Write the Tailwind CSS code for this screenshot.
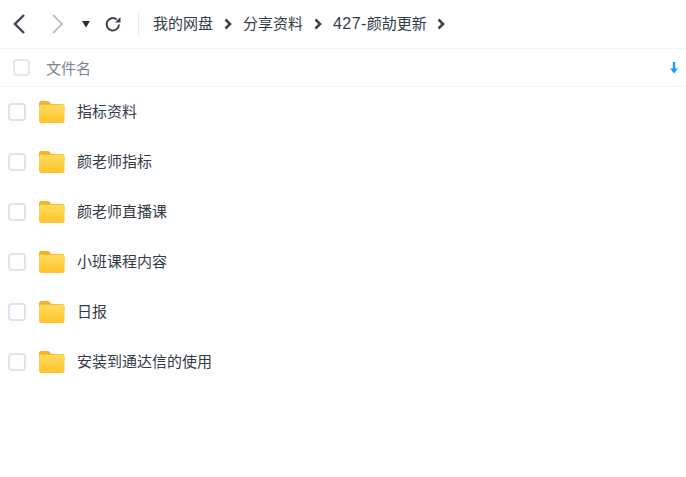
<!DOCTYPE html>
<html lang="zh">
<head>
<meta charset="utf-8">
<script src="https://cdn.jsdelivr.net/npm/@tailwindcss/browser@4"></script>
</head>
<body class="bg-white overflow-hidden font-['Liberation_Sans','Noto_Sans_CJK_SC',sans-serif]">
<svg class="absolute w-0 h-0"><defs><linearGradient id="f1" x1="0" y1="0" x2="0" y2="1"><stop offset="0" stop-color="#ffdc5e"/><stop offset="1" stop-color="#ffc32a"/></linearGradient></defs></svg>
<div class="w-[686px] h-[477px] flex flex-col">
  <div class="h-[49px] flex items-center border-b border-[#f1f2f4] text-[15px] text-[#333b47]">
    <svg class="ml-[12px] w-[14px] h-[22px]" viewBox="0 0 14 22" fill="none" stroke="#3d4450" stroke-width="2.4"><path d="M12 2 3 11l9 9"/></svg>
    <svg class="ml-[25px] w-[14px] h-[22px]" viewBox="0 0 14 22" fill="none" stroke="#c3c6cb" stroke-width="2.2"><path d="M2 2l9 9-9 9"/></svg>
    <svg class="ml-[16px] w-[10px] h-[8px]" viewBox="0 0 10 8" fill="#2a303a"><path d="M1 1h8L5 7.500z"/></svg>
    <svg class="ml-[13px] w-[18px] h-[18px]" viewBox="0 0 18 18" fill="none" stroke="#3d4450" stroke-width="2"><path d="M15 9.500A6.200 6.200 0 1 1 12.800 4.500"/><path d="M11 7.500h5.500V2z" fill="#3d4450" stroke="none"/></svg>
    <div class="ml-[16px] w-px h-[22px] bg-[#e8e9eb]"></div>
    <span class="ml-[14px]">我的网盘</span>
    <svg class="ml-[11px] w-[8px] h-[12px]" viewBox="0 0 8 12" fill="none" stroke="#3d4450" stroke-width="2.600"><path d="M1.500 1.500 6 6l-4.500 4.500"/></svg>
    <span class="ml-[11px]">分享资料</span>
    <svg class="ml-[11px] w-[8px] h-[12px]" viewBox="0 0 8 12" fill="none" stroke="#3d4450" stroke-width="2.600"><path d="M1.500 1.500 6 6l-4.500 4.500"/></svg>
    <span class="ml-[11px]"><span class="text-[16px] tracking-[0.4px]">427-</span>颜劼更新</span>
    <svg class="ml-[10px] w-[8px] h-[12px]" viewBox="0 0 8 12" fill="none" stroke="#3d4450" stroke-width="2.600"><path d="M1.500 1.500 6 6l-4.500 4.500"/></svg>
  </div>
  <div class="h-[38px] flex items-center border-b border-[#f3f4f6] text-[15px] text-[#7d8490]">
    <div class="ml-[13px] w-[17px] h-[17px] rounded-[4px] border-2 border-[#e6e8eb]"></div>
    <span class="ml-[16px] pt-[3px]">文件名</span>
    <svg class="ml-auto mr-[7px] w-[10px] h-[12px]" viewBox="0 0 10 12" fill="#1a9bff"><path d="M3.800 0h2.400v6.500H9L5 11.500 1 6.500h2.800z"/></svg>
  </div>
  <div class="flex flex-col text-[15px] text-[#333b47]">
    <div class="h-[50px] flex items-center"><div class="ml-[8px] w-[18px] h-[18px] rounded-[4px] border-2 border-[#dbe3ec]"></div><svg class="ml-[12px] w-[27px] h-[24px]" viewBox="0 0 27 24"><path d="M1 3.500A2.500 2.500 0 0 1 3.500 1h6c1 0 1.700.4 2.300 1.100L13.200 4H24a2.500 2.500 0 0 1 2.500 2.500V12H1z" fill="#f5b324"/><rect x="1" y="4.800" width="25.500" height="18.200" rx="2.500" fill="url(#f1)"/></svg><span class="ml-[12px] pt-[1px]">指标资料</span></div>
    <div class="h-[50px] flex items-center"><div class="ml-[8px] w-[18px] h-[18px] rounded-[4px] border-2 border-[#dbe3ec]"></div><svg class="ml-[12px] w-[27px] h-[24px]" viewBox="0 0 27 24"><path d="M1 3.500A2.500 2.500 0 0 1 3.500 1h6c1 0 1.700.4 2.300 1.100L13.200 4H24a2.500 2.500 0 0 1 2.500 2.500V12H1z" fill="#f5b324"/><rect x="1" y="4.800" width="25.500" height="18.200" rx="2.500" fill="url(#f1)"/></svg><span class="ml-[12px] pt-[1px]">颜老师指标</span></div>
    <div class="h-[50px] flex items-center"><div class="ml-[8px] w-[18px] h-[18px] rounded-[4px] border-2 border-[#dbe3ec]"></div><svg class="ml-[12px] w-[27px] h-[24px]" viewBox="0 0 27 24"><path d="M1 3.500A2.500 2.500 0 0 1 3.500 1h6c1 0 1.700.4 2.300 1.100L13.200 4H24a2.500 2.500 0 0 1 2.500 2.500V12H1z" fill="#f5b324"/><rect x="1" y="4.800" width="25.500" height="18.200" rx="2.500" fill="url(#f1)"/></svg><span class="ml-[12px] pt-[1px]">颜老师直播课</span></div>
    <div class="h-[50px] flex items-center"><div class="ml-[8px] w-[18px] h-[18px] rounded-[4px] border-2 border-[#dbe3ec]"></div><svg class="ml-[12px] w-[27px] h-[24px]" viewBox="0 0 27 24"><path d="M1 3.500A2.500 2.500 0 0 1 3.500 1h6c1 0 1.700.4 2.300 1.100L13.200 4H24a2.500 2.500 0 0 1 2.500 2.500V12H1z" fill="#f5b324"/><rect x="1" y="4.800" width="25.500" height="18.200" rx="2.500" fill="url(#f1)"/></svg><span class="ml-[12px] pt-[1px]">小班课程内容</span></div>
    <div class="h-[50px] flex items-center"><div class="ml-[8px] w-[18px] h-[18px] rounded-[4px] border-2 border-[#dbe3ec]"></div><svg class="ml-[12px] w-[27px] h-[24px]" viewBox="0 0 27 24"><path d="M1 3.500A2.500 2.500 0 0 1 3.500 1h6c1 0 1.700.4 2.300 1.100L13.200 4H24a2.500 2.500 0 0 1 2.500 2.500V12H1z" fill="#f5b324"/><rect x="1" y="4.800" width="25.500" height="18.200" rx="2.500" fill="url(#f1)"/></svg><span class="ml-[12px] pt-[1px]">日报</span></div>
    <div class="h-[50px] flex items-center"><div class="ml-[8px] w-[18px] h-[18px] rounded-[4px] border-2 border-[#dbe3ec]"></div><svg class="ml-[12px] w-[27px] h-[24px]" viewBox="0 0 27 24"><path d="M1 3.500A2.500 2.500 0 0 1 3.500 1h6c1 0 1.700.4 2.300 1.100L13.200 4H24a2.500 2.500 0 0 1 2.500 2.500V12H1z" fill="#f5b324"/><rect x="1" y="4.800" width="25.500" height="18.200" rx="2.500" fill="url(#f1)"/></svg><span class="ml-[12px] pt-[1px]">安装到通达信的使用</span></div>
  </div>
</div>
</body>
</html>
